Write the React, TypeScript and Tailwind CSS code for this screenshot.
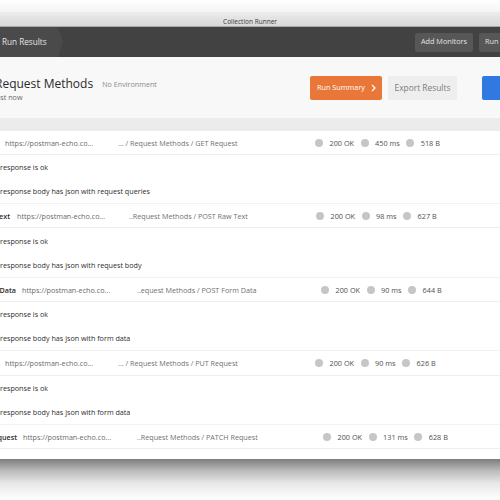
import React from "react";

type Req = {
  name: string;
  nameW: string;
  urlMl: string;
  urlW: string;
  pathW: string;
  pathText: string;
  time: string;
  size: string;
  h: string;
  th: string;
  tests: string[];
};

const reqs: Req[] = [
  {
    name: "GET Request",
    nameW: "w-[198px]",
    urlMl: "ml-[7px]",
    urlW: "w-[113px]",
    pathW: "w-[197px]",
    pathText: "... / Request Methods / GET Request",
    time: "450 ms",
    size: "518 B",
    h: "h-[24px]",
    th: "h-[24.5px]",
    tests: ["response is ok", "response body has json with request queries"],
  },
  {
    name: "POST Raw Text",
    nameW: "w-[210px]",
    urlMl: "ml-[7px]",
    urlW: "w-[112px]",
    pathW: "w-[187px]",
    pathText: "..Request Methods / POST Raw Text",
    time: "98 ms",
    size: "627 B",
    h: "h-[24px]",
    th: "h-[25px]",
    tests: ["response is ok", "response body has json with request body"],
  },
  {
    name: "POST Form Data",
    nameW: "w-[216px]",
    urlMl: "ml-[6px]",
    urlW: "w-[115px]",
    pathW: "w-[184px]",
    pathText: "..equest Methods / POST Form Data",
    time: "90 ms",
    size: "644 B",
    h: "h-[24px]",
    th: "h-[24.5px]",
    tests: ["response is ok", "response body has json with form data"],
  },
  {
    name: "PUT Request",
    nameW: "w-[198px]",
    urlMl: "ml-[7px]",
    urlW: "w-[113px]",
    pathW: "w-[197px]",
    pathText: "... / Request Methods / PUT Request",
    time: "90 ms",
    size: "626 B",
    h: "h-[25px]",
    th: "h-[24.5px]",
    tests: ["response is ok", "response body has json with form data"],
  },
  {
    name: "PATCH Request",
    nameW: "w-[217px]",
    urlMl: "ml-[6px]",
    urlW: "w-[114px]",
    pathW: "w-[186px]",
    pathText: "..Request Methods / PATCH Request",
    time: "131 ms",
    size: "628 B",
    h: "h-[24px]",
    th: "h-[24.5px]",
    tests: ["response is ok"],
  },
];

function Dot() {
  return <span className="w-2 h-2 rounded-full bg-[#c6c6c6] shrink-0" />;
}

export default function App() {
  return (
    <div className="relative w-[500px] h-[500px] overflow-hidden bg-white font-['Open_Sans','Liberation_Sans',sans-serif]">
      <div className="h-[12px] bg-[linear-gradient(to_bottom,#ffffff,#f4f4f4)]" />
      <div className="w-[900px] -ml-[200px] h-[447px] overflow-hidden flex flex-col">
        {/* title bar */}
        <div className="h-[15px] shrink-0 flex items-end justify-center pb-[1.5px] bg-[linear-gradient(to_bottom,#ececec,#d8d8d8)] border-b border-[#a9a9a9]">
          <span className="text-[6.5px] leading-[7px] text-[#3a3a3a]">Collection Runner</span>
        </div>
        {/* dark bar */}
        <div className="h-[30px] shrink-0 bg-[#424242] flex items-center leading-none">
          <div className="w-[263px] h-full bg-[#4a4a4a] [clip-path:polygon(0_0,258px_0,263px_50%,258px_100%,0_100%)] flex items-center pl-[202px]">
            <span className="text-[8.2px] text-[#e4e4e4] whitespace-nowrap">Run Results</span>
          </div>
          <div className="ml-[352px] h-[19px] w-[58px] rounded-[2px] bg-[#575757] flex items-center justify-center">
            <span className="text-[7.3px] text-[#e2e2e2] whitespace-nowrap">Add Monitors</span>
          </div>
          <div className="ml-[6px] h-[19px] w-[50px] rounded-[2px] bg-[#575757] flex items-center pl-[6px]">
            <span className="text-[7.3px] text-[#e2e2e2] whitespace-nowrap">Run Again</span>
          </div>
        </div>
        {/* header */}
        <div className="h-[61px] shrink-0 bg-[#f8f8f8] flex items-start pt-[19px] leading-none">
          <div className="w-[510px] pl-[195px] flex flex-col">
            <div className="flex items-center h-[16px]">
              <span className="text-[12px] leading-[16px] text-[#2a2a2a] whitespace-nowrap">Request Methods</span>
              <span className="ml-[9px] text-[7.2px] leading-[10px] text-[#8a8a8a] whitespace-nowrap">No Environment</span>
            </div>
            <span className="text-[7.2px] leading-[10px] text-[#666] -ml-[1px] whitespace-nowrap">Just now</span>
          </div>
          <div className="w-[72px] h-[24px] rounded-[2px] bg-[#e9773a] flex items-center pl-[7px] gap-[6px]">
            <span className="text-[7.3px] text-white whitespace-nowrap">Run Summary</span>
            <svg width="5" height="8" viewBox="0 0 5 8">
              <path d="M1 1 L4 4 L1 7" fill="none" stroke="#fff" strokeWidth="1.2" />
            </svg>
          </div>
          <div className="ml-[6px] w-[69px] h-[24px] rounded-[2px] bg-[#eeeeee] flex items-center justify-center">
            <span className="text-[8.4px] text-[#7c7c7c] whitespace-nowrap">Export Results</span>
          </div>
          <div className="ml-[25px] w-[60px] h-[24px] rounded-[2px] bg-[#3079e0]" />
        </div>
        {/* table header band */}
        <div className="h-[13px] shrink-0 bg-[#ececec]" />
        {/* rows */}
        <div className="flex flex-col bg-white text-[7.2px] leading-[10px]">
          {reqs.map((r) => (
            <React.Fragment key={r.name}>
              <div className={`${r.h} shrink-0 flex items-center border-b border-[#efefef]`}>
                <div className={`${r.nameW} shrink-0 flex justify-end whitespace-nowrap`}>
                  <span className="font-semibold text-[#2b2b2b]">{r.name}</span>
                </div>
                <div className={`${r.urlMl} ${r.urlW} shrink-0 whitespace-nowrap`}>
                  <span className="text-[#6a6a6a]">https://postman-echo.co...</span>
                </div>
                <div className={`${r.pathW} shrink-0 whitespace-nowrap`}>
                  <span className="text-[#727272]">{r.pathText}</span>
                </div>
                <div className="flex items-center gap-[6.5px] text-[7.3px] text-[#4f4f4f] whitespace-nowrap">
                  <Dot />
                  <span>200 OK</span>
                  <Dot />
                  <span>{r.time}</span>
                  <Dot />
                  <span>{r.size}</span>
                </div>
              </div>
              {r.tests.map((t, i) => (
                <div
                  key={i}
                  className={`${r.th} shrink-0 flex items-center pl-[200px] ${i === r.tests.length - 1 && r.tests.length === 2 ? "border-b border-[#f2f2f2]" : ""}`}
                >
                  <span className="text-[#2e2e2e] whitespace-nowrap">{t}</span>
                </div>
              ))}
            </React.Fragment>
          ))}
        </div>
      </div>
      <div className="h-[41px] bg-[linear-gradient(to_bottom,#7d7d7d,#b9b9b9_28%,#e6e6e6_58%,#ffffff)]" />
    </div>
  );
}
